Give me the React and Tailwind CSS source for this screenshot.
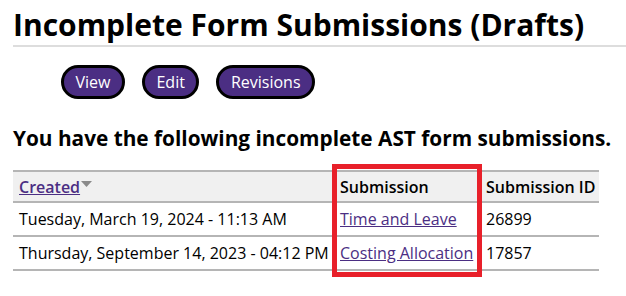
export default function App() {
    const rows = [
        { created: 'Tuesday, March 19, 2024 - 11:13 AM', form: 'Time and Leave', id: '26899' },
        { created: 'Thursday, September 14, 2023 - 04:12 PM', form: 'Costing Allocation', id: '17857' },
    ];

    return (
        <div className="relative min-h-screen bg-white pl-[13px] pt-[5px] text-black" style={{ fontFamily: '"Open Sans", sans-serif' }}>
            <h1 className="whitespace-nowrap border-b-2 border-[#dddddd] text-[30px] font-bold leading-[40px]">
                Incomplete Form Submissions (Drafts)
            </h1>

            <div className="mt-[18px] flex gap-[17px] pl-[48px]">
                {['View', 'Edit', 'Revisions'].map((label) => (
                    <button
                        key={label}
                        className="h-[34px] rounded-full border-[3px] border-black bg-[#4b2e83] px-[11.5px] text-[16px] leading-none text-white"
                    >
                        {label}
                    </button>
                ))}
            </div>

            <h2 className="mt-[25px] whitespace-nowrap text-[20.8px] font-bold leading-[28px]">
                You have the following incomplete AST form submissions.
            </h2>

            <table className="mt-[18px] w-[586px] table-fixed border-collapse whitespace-nowrap text-[16px]">
                <colgroup>
                    <col className="w-[321px]" />
                    <col className="w-[146px]" />
                    <col className="w-[119px]" />
                </colgroup>
                <thead>
                    <tr className="border-y-2 border-[#b5b5b5] bg-[#f0f0f0]">
                        <th className="h-[31px] px-[6px] text-left font-semibold">
                            <a href="#" className="text-[#4b2e83] underline">Created</a>
                            <svg width="11" height="6" viewBox="0 0 11 6" className="ml-[1px] inline-block align-[6px]">
                                <path d="M0 0h11L5.5 6z" fill="#8a8a8a" />
                            </svg>
                        </th>
                        <th className="px-[6px] text-left font-semibold">Submission</th>
                        <th className="px-[6px] text-left font-semibold">Submission ID</th>
                    </tr>
                </thead>
                <tbody>
                    {rows.map((r) => (
                        <tr key={r.id} className="border-b-2 border-[#b5b5b5]">
                            <td className="h-[34px] px-[6px]">{r.created}</td>
                            <td className="px-[6px]">
                                <a href="#" className="text-[#4b2e83] underline">{r.form}</a>
                            </td>
                            <td className="px-[6px]">{r.id}</td>
                        </tr>
                    ))}
                </tbody>
            </table>

            <div className="pointer-events-none absolute left-[332px] top-[164px] h-[113px] w-[150px] border-[5px] border-[#e8202a]" />
        </div>
    );
}
